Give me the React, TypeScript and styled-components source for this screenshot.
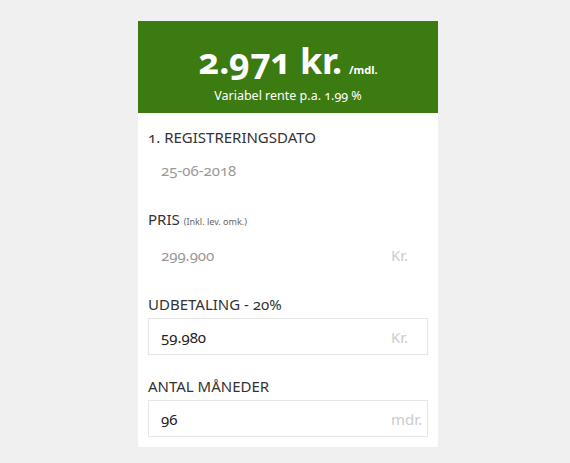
import styled, { createGlobalStyle } from "styled-components"

const GlobalStyle = createGlobalStyle`
    html, body {
        margin: 0;
        padding: 0;
        background: #f0f0f0;
        font-family: "Noto Sans", "Open Sans", sans-serif;
    }
`

interface FieldI {
    label: string
    note?: string
    value: string
    unit?: string
    editable?: boolean
}

const fields: FieldI[] = [
    { label: "1. REGISTRERINGSDATO", value: "25-06-2018" },
    { label: "PRIS", note: "(Inkl. lev. omk.)", value: "299.900", unit: "Kr." },
    { label: "UDBETALING - 20%", value: "59.980", unit: "Kr.", editable: true },
    { label: "ANTAL MÅNEDER", value: "96", unit: "mdr.", editable: true },
]

function App() {
    return (
        <>
            <GlobalStyle />
            <Calculator>
                <Summary>
                    <Amount>
                        2.971 kr.<Per>/mdl.</Per>
                    </Amount>
                    <Rate>Variabel rente p.a. 1.99 %</Rate>
                </Summary>
                <Form>
                    {fields.map((field, index) => (
                        <Field key={index}>
                            <Label>
                                {field.label}
                                {field.note && <Note>{field.note}</Note>}
                            </Label>
                            <InputBox $editable={!!field.editable}>
                                <Value $editable={!!field.editable}>{field.value}</Value>
                                {field.unit && <Unit>{field.unit}</Unit>}
                            </InputBox>
                        </Field>
                    ))}
                </Form>
            </Calculator>
        </>
    )
}

export default App

const Calculator = styled.div`
    width: 300px;
    margin: 21px 0 0 138px;
    background: #fff;
`

const Summary = styled.div`
    height: 92px;
    background: #3b7b12;
    color: #fff;
    display: flex;
    flex-direction: column;
    align-items: center;
    padding-top: 20px;
    box-sizing: border-box;
`

const Amount = styled.div`
    font-size: 36px;
    font-weight: 700;
    line-height: 40px;
    font-variant-numeric: oldstyle-nums;
    letter-spacing: -0.3px;
`

const Per = styled.span`
    font-size: 11px;
    font-weight: 700;
    letter-spacing: 0;
    margin-left: 7px;
`

const Rate = styled.div`
    font-size: 12.5px;
    line-height: 18px;
    margin-top: -3px;
    font-variant-numeric: oldstyle-nums;
`

const Form = styled.div`
    padding: 14px 10px 10px;
`

const Field = styled.div`
    margin-bottom: 21px;

    &:last-child {
        margin-bottom: 0;
    }
`

const Label = styled.div`
    font-size: 15px;
    line-height: 20px;
    color: #333;
    margin-bottom: 4px;
    font-variant-numeric: oldstyle-nums;
`

const Note = styled.span`
    font-size: 9px;
    color: #666;
    margin-left: 4px;
`

const InputBox = styled.div<{ $editable: boolean }>`
    height: 37px;
    box-sizing: border-box;
    border: 1px solid ${({ $editable }) => ($editable ? "#e6e6e6" : "transparent")};
    display: flex;
    align-items: center;
    padding-left: 12px;
`

const Value = styled.span<{ $editable: boolean }>`
    flex: 1;
    font-size: 15px;
    color: ${({ $editable }) => ($editable ? "#222" : "#999")};
    font-variant-numeric: oldstyle-nums;
`

const Unit = styled.span`
    width: 36px;
    font-size: 15px;
    color: #ccc;
`
